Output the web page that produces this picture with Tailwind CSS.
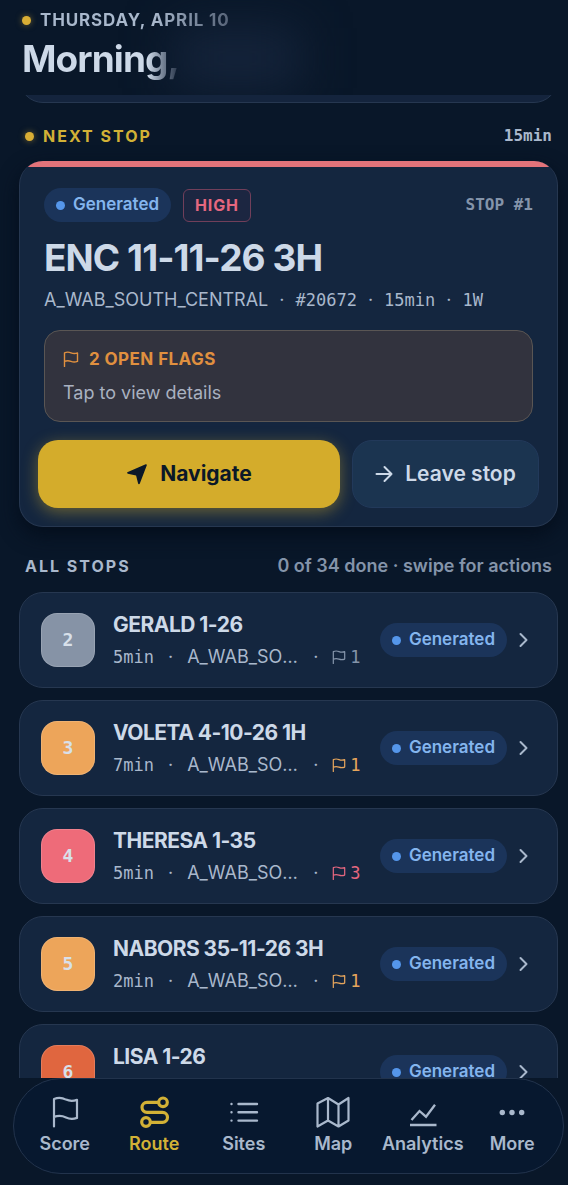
<!DOCTYPE html>
<html lang="en">
<head>
<meta charset="utf-8">
<meta name="viewport" content="width=device-width, initial-scale=1">
<title>Route</title>
<script src="https://cdn.jsdelivr.net/npm/@tailwindcss/browser@4"></script>
</head>
<body class="bg-[#091729] font-['Inter',sans-serif] text-[#cdd9e8]">
<svg class="hidden" aria-hidden="true">
  <symbol id="flag" viewBox="0 0 16 16"><path d="M1.5 15.5V1.8C4 .8 6 1 8 1.800s4 1 6.500.1v8.500c-2.500.8-4.500.7-6.500 0s-4-.9-6.500 0" fill="none" stroke="currentColor" stroke-width="1.400" stroke-linejoin="round" stroke-linecap="round"/></symbol>
  <symbol id="chevron" viewBox="0 0 10 16"><path d="M1.500 2l6 6-6 6" fill="none" stroke="currentColor" stroke-width="2" stroke-linecap="round" stroke-linejoin="round"/></symbol>
</svg>
<div class="flex h-screen flex-col overflow-hidden">
  <header class="relative h-[95px] shrink-0 overflow-hidden px-[22px] pt-2">
    <div class="absolute top-7 left-[175px] h-[60px] w-[125px] bg-[#15243b] blur-xl"></div>
    <div class="relative flex items-center gap-[9px]">
      <span class="size-[9px] rounded-full bg-[#d9ae35] shadow-[0_0_6px_#d9ae3580]"></span>
      <p class="bg-linear-to-r from-[#a9b8cc] from-60% to-[#566377] bg-clip-text text-[17px] leading-6 font-bold tracking-wider text-transparent">THURSDAY, APRIL 10</p>
    </div>
    <h1 class="relative w-fit bg-linear-to-r from-[#cdd9e8] from-80% to-[#253246] bg-clip-text pt-[3px] text-[37px] leading-12 font-bold tracking-tight text-transparent">Morning,</h1>
  </header>
  <main class="min-h-0 flex-1 overflow-hidden pr-[10px] pl-[19px]">
    <div class="h-2 overflow-hidden">
      <div class="-mt-10 h-12 rounded-3xl border border-[#263750] bg-[#14243d]"></div>
    </div>
    <section aria-labelledby="next">
      <div class="flex h-[58px] items-center justify-between px-[6px] pt-2">
        <h2 id="next" class="flex items-center gap-[9px] text-base font-bold tracking-[2px] text-[#d2b136]"><span class="size-[9px] rounded-full bg-[#d9ae35] shadow-[0_0_6px_#d9ae3580]"></span>NEXT STOP</h2>
        <span class="font-['DejaVu_Sans_Mono',monospace] text-base font-bold text-[#a9b8cc]">15min</span>
      </div>
      <article class="overflow-hidden rounded-3xl border border-t-0 border-[#263750] bg-[#14263f] shadow-[0_8px_20px_#040e1c]">
        <div class="h-[6px] bg-[#e2737a]"></div>
        <div class="px-6 pt-[21px]">
          <div class="flex items-center gap-3">
            <span class="flex h-[34px] items-center gap-2 rounded-full bg-[#1b345a] px-3 text-[17px] font-semibold text-[#84b5ee]"><span class="size-[9px] rounded-full bg-[#5596ea]"></span>Generated</span>
            <span class="flex h-[33px] items-center rounded-md border border-[#713f5a] bg-[#1c2641] px-[11px] text-base font-bold tracking-wider text-[#e5677f]">HIGH</span>
            <span class="ml-auto font-['DejaVu_Sans_Mono',monospace] text-base font-bold text-[#8494aa]">STOP #1</span>
          </div>
          <h3 class="pt-3 text-[37px] leading-12 font-bold tracking-tight">ENC 11-11-26 3H</h3>
          <p class="flex items-center gap-[11px] pt-[6px] text-lg leading-6 text-[#a9b8cc]"><span>A_WAB_SOUTH_CENTRAL</span><span>·</span><span class="font-['DejaVu_Sans_Mono',monospace] text-[17px] leading-6">#20672</span><span>·</span><span class="font-['DejaVu_Sans_Mono',monospace] text-[17px] leading-6">15min</span><span>·</span><span class="font-['DejaVu_Sans_Mono',monospace] text-[17px] leading-6">1W</span></p>
          <button type="button" class="mt-[18px] block h-[92px] w-full rounded-2xl border border-[#5a5654] bg-[#32333e] px-[18px] text-left">
            <span class="flex items-center gap-[10px] text-[17px] leading-6 font-bold tracking-wide text-[#e0903f]"><svg class="size-4"><use href="#flag"/></svg>2 OPEN FLAGS</span>
            <span class="block pt-[10px] text-lg leading-6 text-[#a9b1c0]">Tap to view details</span>
          </button>
        </div>
        <div class="grid grid-cols-[302fr_187fr] gap-3 p-[18px]">
          <button type="button" class="flex h-[68px] items-center justify-center gap-3 rounded-[20px] bg-[#d4ac2b] text-[21px] font-bold text-[#0b1828] shadow-[0_4px_16px_#d4ac2b70]"><svg class="size-[22px]" viewBox="0 0 24 24" fill="currentColor"><path d="M22.500 1.500a1 1 0 0 0-1-.2L2 9.800c-1 .4-1 1.500 0 1.800l9 2 2.200 8.800c.3 1 1.500 1 1.900 0l7.600-20a1 1 0 0 0-.2-.9z"/></svg>Navigate</button>
          <button type="button" class="flex h-[68px] items-center justify-center gap-3 rounded-[20px] border border-[#22395a] bg-[#1b3450] text-[21px] font-semibold"><svg class="h-5 w-[18px]" viewBox="0 0 18 20" fill="none" stroke="currentColor" stroke-width="2" stroke-linecap="round" stroke-linejoin="round"><path d="M1.500 10h15M9.500 3l7 7-7 7"/></svg>Leave stop</button>
        </div>
      </article>
    </section>
    <section aria-labelledby="all">
      <div class="flex h-[65px] items-center justify-between px-[6px] pt-[13px]">
        <h2 id="all" class="text-base font-bold tracking-[2px] text-[#a9b8cc]">ALL STOPS</h2>
        <p class="text-lg font-semibold text-[#8494aa]">0 of 34 done · swipe for actions</p>
      </div>
      <ul id="stops" class="flex flex-col gap-3"></ul>
    </section>
  </main>
  <div class="shrink-0 pr-1 pb-[11px] pl-[13px]">
    <nav class="grid h-24 grid-cols-6 rounded-full border border-[#22334c] bg-[#07182f] px-[6px] text-lg leading-6 font-semibold text-[#a9b8cc]">
      <a href="#score" class="flex flex-col items-center gap-1 pt-[17px]"><svg class="size-8" viewBox="0 0 32 32" fill="none" stroke="currentColor" stroke-width="2.200" stroke-linecap="round" stroke-linejoin="round"><path d="M5 30.500V3c4-1.600 8-1.500 12 .6 4 1.800 7 1.600 11 .3v18c-4 1.400-7 1.500-11-.4-4-2-8-2-12-.6"/></svg>Score</a>
      <a href="#route" aria-current="page" class="flex flex-col items-center gap-1 pt-[17px] text-[#d2b136]"><svg class="size-8" viewBox="0 0 32 32" fill="none" stroke="currentColor" stroke-width="3.200" stroke-linecap="round"><circle cx="25" cy="6.300" r="4.300"/><circle cx="8" cy="26" r="4.300"/><path d="M20.500 6.300H9a5 5 0 0 0 0 10h15.500a5 5 0 0 1 0 10H13"/></svg>Route</a>
      <a href="#sites" class="flex flex-col items-center gap-1 pt-[17px]"><svg class="size-8" viewBox="0 0 32 32" fill="none" stroke="currentColor" stroke-width="2.400" stroke-linecap="round"><path d="M10.500 8h18.500M10.500 16.300h18.500M10.500 24.600h18.500M3.500 8h.01M3.500 16.300h.01M3.500 24.600h.01"/></svg>Sites</a>
      <a href="#map" class="flex flex-col items-center gap-1 pt-[17px]"><svg class="h-8 w-[34px]" viewBox="0 0 34 32" fill="none" stroke="currentColor" stroke-width="2.200" stroke-linejoin="round"><path d="M1.500 7.500l10.500-5.500 10.500 6.500 10-6.500v22.500l-10 6-10.500-6-10.500 6zM12 2v22.500M22.500 8.500v22"/></svg>Map</a>
      <a href="#analytics" class="flex flex-col items-center gap-1 pt-[17px]"><svg class="size-8" viewBox="0 0 32 32" fill="none" stroke="currentColor" stroke-width="2.300"><path d="M4.500 24l8-9 6.500 5.700 9-12M3 29h26.500"/></svg>Analytics</a>
      <a href="#more" class="flex flex-col items-center gap-1 pt-[17px]"><svg class="size-8" viewBox="0 0 32 32" fill="currentColor"><circle cx="6.300" cy="16.500" r="2.700"/><circle cx="16" cy="16.500" r="2.700"/><circle cx="25.700" cy="16.500" r="2.700"/></svg>More</a>
    </nav>
  </div>
</div>
<script>
const stops = [
  [2, 'GERALD 1-26', '5min', 1, 'bg-[#8693a6]', 'text-[#8494aa]'],
  [3, 'VOLETA 4-10-26 1H', '7min', 1, 'bg-[#eda55a]', 'text-[#e6a55c]'],
  [4, 'THERESA 1-35', '5min', 3, 'bg-[#ee6b79]', 'text-[#e5677f]'],
  [5, 'NABORS 35-11-26 3H', '2min', 1, 'bg-[#eda55a]', 'text-[#e6a55c]'],
  [6, 'LISA 1-26', '', 0, 'bg-[#e0663f]', ''],
];
document.getElementById('stops').innerHTML = stops.map(([n, name, time, flags, bg, fg]) => `
<li class="flex h-24 items-center rounded-3xl border border-[#263750] bg-[#14263f] pr-7 pl-[21px]">
  <span class="flex size-[54px] shrink-0 items-center justify-center rounded-2xl border border-white/15 ${bg} font-['DejaVu_Sans_Mono',monospace] text-lg font-bold text-[#d8e0ea]">${n}</span>
  <div class="ml-[18px] min-w-0 flex-1 pt-[2px]">
    <h3 class="truncate text-[21px] leading-8 font-bold tracking-tight">${name}</h3>
    <p class="flex h-8 items-center gap-[14px] text-lg leading-8 text-[#a9b8cc]">${time && `<span class="shrink-0 font-['DejaVu_Sans_Mono',monospace] text-[17px]">${time}</span><span class="shrink-0">·</span><span class="min-w-0 max-w-28 truncate">A_WAB_SOUTH_CENTRAL</span><span class="shrink-0">·</span><span class="flex shrink-0 items-center gap-1 font-['DejaVu_Sans_Mono',monospace] text-[17px] ${fg}"><svg class="size-[14px]"><use href="#flag"/></svg>${flags}</span>`}</p>
  </div>
  <span class="ml-4 flex h-[34px] shrink-0 items-center gap-2 rounded-full bg-[#1b345a] px-3 text-[17px] font-semibold text-[#84b5ee]"><span class="size-[9px] rounded-full bg-[#5596ea]"></span>Generated</span>
  <svg class="ml-3 h-4 w-[10px] shrink-0 text-[#a9b8cc]"><use href="#chevron"/></svg>
</li>`).join('');
</script>
</body>
</html>
